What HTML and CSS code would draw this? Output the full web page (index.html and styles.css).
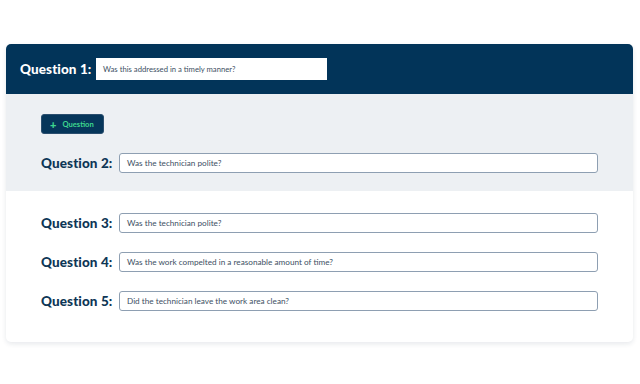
FILE: index.html
```html
<!DOCTYPE html>
<html>
<head>
<meta charset="utf-8">
<link rel="stylesheet" href="styles.css">
</head>
<body>
<div class="card">
  <div class="header">
    <span class="label label-light">Question 1:</span>
    <div class="input input-plain">Was this addressed in a timely manner?</div>
  </div>
  <div class="grey">
    <button class="add-btn"><span class="plus">+</span>Question</button>
    <div class="row">
      <span class="label">Question 2:</span>
      <div class="input">Was the technician polite?</div>
    </div>
  </div>
  <div class="white">
    <div class="row">
      <span class="label">Question 3:</span>
      <div class="input">Was the technician polite?</div>
    </div>
    <div class="row">
      <span class="label">Question 4:</span>
      <div class="input">Was the work compelted in a reasonable amount of time?</div>
    </div>
    <div class="row">
      <span class="label">Question 5:</span>
      <div class="input">Did the technician leave the work area clean?</div>
    </div>
  </div>
</div>
</body>
</html>
```

FILE: styles.css
```css
* { box-sizing: border-box; }
html, body { margin: 0; padding: 0; background: #ffffff; }
body {
  width: 640px;
  height: 384px;
  font-family: "Lato", "Inter", sans-serif;
  padding-top: 44px;
}
.card {
  margin-left: 6px;
  width: 627px;
  border-radius: 5px;
  background: #fff;
  box-shadow: 0 2px 5px rgba(20, 40, 70, 0.10);
  overflow: hidden;
}
.header {
  height: 50px;
  background: #023459;
  display: flex;
  align-items: center;
  padding-left: 14px;
  gap: 6px;
}
.label {
  font-weight: 900;
  font-size: 13.5px;
  color: #0e3656;
  width: 72px;
  flex: none;
  white-space: nowrap;
  letter-spacing: 0.1px;
}
.label-light { color: #ffffff; width: 70px; }
.input {
  height: 20px;
  flex: none;
  width: 479px;
  border: 1px solid #8e9fb2;
  border-radius: 3px;
  background: #fff;
  font-size: 8.2px;
  color: #3d4f63;
  display: flex;
  align-items: center;
  padding-left: 7px;
  font-family: "Lato", sans-serif;
}
.input-plain {
  width: 231px;
  height: 22px;
  border: none;
  border-radius: 0;
  font-size: 7.7px;
}
.grey {
  background: #edf0f3;
  padding: 20px 0 18px 35px;
  height: 97px;
}
.add-btn {
  display: flex;
  align-items: center;
  height: 20px;
  width: 63px;
  padding: 0 0 0 8px;
  background: #06365a;
  border: 1px solid #2a4e6e;
  border-radius: 3px;
  color: #3ed68e;
  font-family: "Lato", sans-serif;
  font-weight: 700;
  font-size: 7.6px;
  margin-bottom: 19px;
}
.plus {
  font-size: 11px;
  font-weight: 900;
  margin-right: 6px;
  line-height: 1;
}
.row {
  display: flex;
  align-items: center;
  gap: 6px;
}
.white {
  padding: 22px 0 31px 35px;
  display: flex;
  flex-direction: column;
  gap: 19px;
}
```
